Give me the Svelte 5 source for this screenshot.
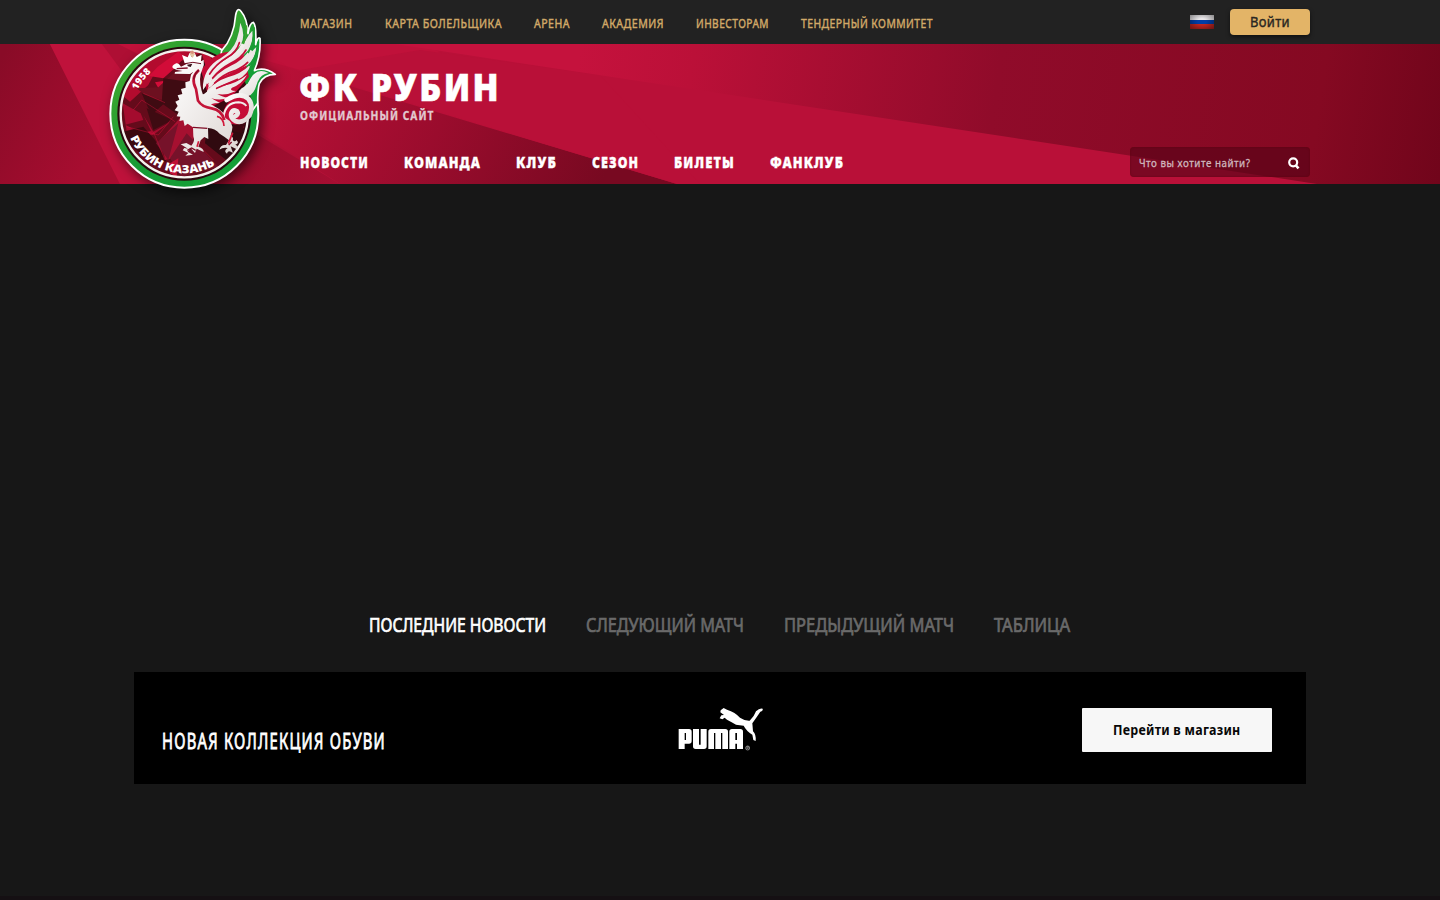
<script>
  const topLinks = [
    ['МАГАЗИН', 52.5], ['КАРТА БОЛЕЛЬЩИКА', 117], ['АРЕНА', 36],
    ['АКАДЕМИЯ', 62], ['ИНВЕСТОРАМ', 73], ['ТЕНДЕРНЫЙ КОММИТЕТ', 132]
  ];
  const menu = [['НОВОСТИ', 68], ['КОМАНДА', 76], ['КЛУБ', 40], ['СЕЗОН', 46], ['БИЛЕТЫ', 60], ['ФАНКЛУБ', 73]];
  const tabs = [['ПОСЛЕДНИЕ НОВОСТИ', 177], ['СЛЕДУЮЩИЙ МАТЧ', 158], ['ПРЕДЫДУЩИЙ МАТЧ', 170], ['ТАБЛИЦА', 76]];
</script>

{#snippet label(text, width, size, height)}
  <svg class="label" {width} {height} role="img" aria-label={text}>
    <text x="0" y={height - 1} font-size={size} textLength={width} lengthAdjust="spacingAndGlyphs">{text}</text>
  </svg>
{/snippet}

<div class="page">
  <header>
    <div class="topbar">
      <nav class="toplinks">
        {#each topLinks as [t, w]}<a href="#top">{@render label(t, w, 12.7, 10)}</a>{/each}
      </nav>
      <div class="account">
        <span class="flag"></span>
        <button class="login">{@render label('Войти', 40, 14.8, 12)}</button>
      </div>
    </div>

    <div class="hero">
      <svg class="facets" viewBox="0 44 1440 140" preserveAspectRatio="none">
        <defs>
          <linearGradient id="left" gradientUnits="userSpaceOnUse" x1="0" y1="60" x2="110" y2="120"><stop stop-color="#890b27"/><stop offset="1" stop-color="#a70d30"/></linearGradient>
          <linearGradient id="mid" gradientUnits="userSpaceOnUse" x1="270" y1="90" x2="580" y2="230"><stop stop-color="#b91037"/><stop offset=".5" stop-color="#9a0c2d"/><stop offset="1" stop-color="#780921"/></linearGradient>
          <linearGradient id="right" gradientUnits="userSpaceOnUse" x1="580" y1="50" x2="1440" y2="180"><stop stop-color="#c5123d"/><stop offset=".13" stop-color="#bb1038"/><stop offset=".48" stop-color="#900b2a"/><stop offset=".85" stop-color="#850922"/><stop offset="1" stop-color="#71051b"/></linearGradient>
          <linearGradient id="shade" gradientUnits="userSpaceOnUse" x1="240" y1="130" x2="335" y2="184"><stop stop-color="#970c2b"/><stop offset="1" stop-color="#a60e32"/></linearGradient>
        </defs>
        <path fill="#b91038" d="M0 44H1440V184H0Z"/>
        <path fill="url(#left)" d="M0 44H50L120 184H0Z"/>
        <path fill="#bf123b" d="M50 44H102L210 184H120Z"/>
        <path fill="#ae0f34" d="M102 44H118L300 120V184H205Z"/>
        <path fill="url(#mid)" d="M210 44L677 184H340L200 95Z"/>
        <path fill="#c0113a" d="M118 44H420L440 52L395 80L300 70L220 48V95Z"/>
        <path fill="#b91038" d="M300 70L420 50L600 75L700 184H677Z"/>
        <path fill="url(#shade)" d="M200 100L340 184H180Z"/>
        <path fill="url(#right)" d="M395 44H1440V184H1317Z"/>
      </svg>
      <div class="hero-inner">
        <div class="title">{@render label('ФК РУБИН', 202, 37.5, 30)}</div>
        <div class="subtitle">{@render label('ОФИЦИАЛЬНЫЙ САЙТ', 134.5, 11.6, 10)}</div>
        <div class="menu-row">
          <nav class="menu">{#each menu as [t, w]}<a href="#menu">{@render label(t, w + 1, 15, 12)}</a>{/each}</nav>
          <div class="search">
            {@render label('Что вы хотите найти?', 111.5, 11.2, 10)}
            <svg class="glass" width="12" height="13" viewBox="0 0 12 13"><circle cx="5.2" cy="5.3" r="4" fill="none" stroke="#fff" stroke-width="2.2"/><path d="M7.5 8l3 3.4" stroke="#fff" stroke-width="2.6"/></svg>
          </div>
        </div>
      </div>
    </div>

    <svg class="crest" width="200" height="210" viewBox="0 0 600 630" role="img" aria-label="Рубин Казань 1958">
      <defs>
        <linearGradient id="green" x1="0" y1="0" x2="1" y2="1"><stop stop-color="#4aaa2b"/><stop offset=".5" stop-color="#189b35"/><stop offset="1" stop-color="#12a238"/></linearGradient>
        <linearGradient id="pearl" x1="0" y1="0" x2="1" y2="1"><stop stop-color="#fff"/><stop offset="1" stop-color="#ddd5d2"/></linearGradient>
        <clipPath id="disc"><circle cx="268" cy="341" r="191"/></clipPath>
        <path id="arcYear" d="M127 271A158 158 0 0 1 174 212"/>
        <path id="arcName" d="M105 414A180 180 0 0 0 377 484"/>
      </defs>
      <g class="silhouette">
        <circle cx="268" cy="341" r="222" fill="url(#green)" stroke="#fff" stroke-width="6"/>
        <path fill="url(#green)" stroke="#fff" stroke-width="5" stroke-linejoin="round" d="M380 152C410 120 419 85 422 45Q427 20 438 34C455 54 458 76 459 101Q464 68 475 67Q485 77 482 134Q487 109 495 115C497 151 492 181 478 212Q507 199 541 223Q506 223 493 251Q488 267 488 310L440 375L360 250Z"/>
      </g>
      <circle cx="268" cy="341" r="201" fill="#29090e"/>
      <g clip-path="url(#disc)">
        <path fill="#650b1b" d="M70 140H470V550H70Z"/>
        <path fill="#b30b2e" d="M130 190L250 145L315 160L240 190L185 208L160 255L105 305L80 285Z"/>
        <path fill="#d20c38" d="M188 200L250 155L270 170L239 205L205 235L162 228ZM180 247L238 238L225 275L190 264Z"/>
        <path fill="#6d1020" d="M125 265L190 262L245 210L295 215L238 310L150 285Z"/>
        <path fill="#3f0b12" d="M140 280L210 308L175 340L160 325ZM205 235L280 245L250 345L200 310ZM155 325L232 360L175 390Z"/>
        <path fill="#a40c2e" d="M83 310L110 325L137 340L145 360L91 374L120 390L95 395ZM145 345L168 393L119 402L174 405L226 367L175 395Z"/>
        <path fill="#3b090f" d="M83 395L145 380L180 420L215 485L160 475L110 440Z"/>
        <path fill="#a61030" d="M198 418L258 350L310 380L275 465L210 480Z"/>
        <path fill="#76122a" d="M183 430L250 370L220 480ZM225 475L275 400L370 500L260 530Z"/>
        <path fill="#300a10" d="M335 380L470 350L450 410L400 485L330 430ZM335 150L385 190L350 260L315 225Z"/>
        <path fill="#c01034" d="M320 160L350 170L348 195L335 210ZM405 372L450 363L445 385L410 390ZM225 490L250 475L245 530L225 520Z"/>
        <g fill="none" stroke="#e01440" stroke-width="2" opacity=".6"><path d="M115 330L140 300L210 345L240 365M95 380L190 405L235 350M175 395L210 480M315 440L355 480M145 280L210 308"/></g>
      </g>
      <circle cx="268" cy="341" r="191" fill="none" stroke="#f5f2ee" stroke-width="7"/>
      <text class="crest-text" font-size="29"><textPath href="#arcYear" textLength="69">1958</textPath></text>
      <text class="crest-text" font-size="34"><textPath href="#arcName" textLength="302" lengthAdjust="spacingAndGlyphs">РУБИН КАЗАНЬ</textPath></text>

      <path fill="#3b0810" d="M345 240L430 235L450 245L470 300L440 400L335 375L290 300Z"/>
      <path fill="#c30c35" d="M318 212Q350 160 400 155L445 160L462 230L410 290L350 320Z"/>
      <path fill="url(#pearl)" d="M488 245Q497 223 521 219Q485 202 467 235Q456 257 440 265Q428 274 432 284Q465 300 480 268Z"/>
      <g fill="url(#pearl)">
        <path d="M324 270C321 228 343 191 378 174Q414 151 425 119Q434 93 436 68Q453 107 437 136Q411 164 378 186Q344 210 333 257Z"/>
        <path d="M339 246C355 206 386 184 414 168Q440 151 450 124Q460 104 472 92Q476 128 460 151Q441 173 408 190Q367 209 343 254Z"/>
        <path d="M341 258C359 224 398 204 432 188Q461 169 484 140Q482 175 458 195Q421 212 396 224Q359 240 338 269Z"/>
        <path d="M337 270Q363 244 398 232Q437 223 467 193Q459 225 428 239Q381 251 335 281Z"/>
        <path d="M327 282Q351 260 386 257Q423 251 456 225Q440 253 411 263Q401 271 423 273Q395 287 367 282Q388 294 400 292Q380 304 349 295L375 309Q342 309 331 323Q317 306 314 285Z"/>
      </g>
      <path fill="none" stroke="url(#pearl)" stroke-width="11" d="M334 250Q350 211 393 184Q433 162 445 132M343 258Q370 221 410 202Q449 184 469 151"/>
      <g fill="none" stroke="#c30d36" stroke-width="5" stroke-linecap="round"><path d="M344 222Q362 193 398 171Q425 156 433 128M353 234Q374 208 407 190Q440 174 453 150M359 249Q386 222 420 212Q446 200 458 187M365 265Q400 250 428 238"/></g>
      <g fill="none" stroke="url(#green)" stroke-width="5"><path d="M454 76Q457 105 445 132M477 82Q480 121 459 159M490 126Q486 174 462 198M474 211L455 251"/></g>

      <path fill="#c50d37" d="M382 370Q378 303 435 288Q475 296 470 340Q453 377 415 373Z"/>
      <path fill="none" stroke="url(#pearl)" stroke-width="14" stroke-linecap="round" d="M395 300Q436 274 460 296Q477 317 463 347Q444 372 421 363Q405 354 409 339Q414 328 425 333Q433 341 423 347"/>
      <path fill="none" stroke="url(#pearl)" stroke-width="6" d="M386 350Q391 308 431 307Q447 308 454 318"/>
      <path fill="url(#pearl)" d="M320 183L326 179Q329 194 322 208Q309 235 320 272Q326 300 355 317Q389 334 391 354Q417 368 411 391L407 407Q417 413 413 420Q420 428 424 420Q435 429 421 434Q435 440 425 448L407 439L414 459Q398 447 396 461Q384 453 398 444Q384 441 373 449Q377 433 393 435L402 421Q389 410 374 401Q360 385 339 384L340 417L328 411L317 421L310 440Q327 446 326 456L305 446L300 459L286 443L278 455L294 464L271 467L280 459L263 451L268 444L279 446L257 433L274 429L289 437Q301 425 295 409L294 382L278 371L269 378L265 361L253 363L256 350L245 349L251 335L239 331L248 318L241 305L253 299L248 286L262 282L258 267L272 263L271 247L284 243L288 224L295 215L285 222L239 221L240 216L263 213Q247 213 234 205Q227 197 244 190Q251 187 258 200L279 190L290 185Z"/>
      <path fill="none" stroke="#c31438" stroke-width="8" d="M312 210Q285 232 303 267L309 302Q320 321 350 325Q381 331 388 360"/>
      <path fill="none" stroke="#7f0b25" stroke-width="4" d="M294 382L337 385M311 210Q299 221 296 238M245 206L278 204M277 451L290 444L302 451M401 435L410 426"/>
      <path fill="none" stroke="#d11639" stroke-width="5" d="M311 424L306 440M413 398L400 431M366 349Q386 354 387 378"/>
      <path fill="#38101a" d="M276 194L292 191L287 201L279 199Z"/>
      <path fill="#fff" d="M269 190L261 165L278 172L284 158L290 171L298 157L305 171L320 164L317 190Z"/>
      <path fill="none" stroke="#6f1023" stroke-width="3" d="M269 191Q294 183 318 191"/>
      <path fill="#e4c7a5" d="M283 161L291 151L300 162L293 174Z"/><circle cx="292" cy="157" r="5" fill="#d9917c"/>
    </svg>
  </header>

  <main>
    <div class="slider"></div>
    <nav class="tabs">{#each tabs as [t, w], i}<a href="#tab" class:active={i === 0}>{@render label(t, w, 19.3, 16)}</a>{/each}</nav>
    <section class="banner">
      <div class="promo">{@render label('НОВАЯ КОЛЛЕКЦИЯ ОБУВИ', 224, 21.5, 18)}</div>
      <svg class="puma" width="90" height="46" viewBox="50 32 270 138" role="img" aria-label="Puma">
        <g fill="#fff" fill-rule="evenodd">
          <path d="M55 101H86Q94 101 94 109V137Q94 145 86 145H73V161H55ZM73 113V134H77V113Z"/>
          <path d="M98 101H116V148H121V101H139V153Q139 161 131 161H106Q98 161 98 153Z"/>
          <path d="M144 161V109Q144 101 152 101H195Q203 101 203 109V161H186V113H182V161H165V113H161V161Z"/>
          <path d="M207 161V109Q207 101 215 101H240Q248 101 248 109V161H230V145H225V161ZM225 113V134H230V113Z"/>
          <path d="M181 45L190 38L200 43Q225 51 239 67Q254 77 268 76Q281 65 287 48Q298 37 307 40Q309 46 300 49Q290 64 276 84L278 108Q288 118 286 137L279 134L276 118Q258 107 250 91Q238 89 227 88L214 81L200 73L193 67L186 72L178 69L183 60L191 59L180 51Z"/>
        </g>
        <circle cx="262" cy="158" r="6" fill="none" stroke="#bbb" stroke-width="2"/><path d="M260 162V154H264V158H260M262 158L265 162" fill="none" stroke="#bbb" stroke-width="1.5"/>
      </svg>
      <button class="shop">{@render label('Перейти в магазин', 127.5, 14.8, 12)}</button>
    </section>
  </main>
  <footer></footer>
</div>

<style>
  :global(body) { background: #171717; }
  .page { height: 900px; display: flex; flex-direction: column; overflow: hidden; background: #171717; font-family: "Noto Sans", "Open Sans", sans-serif; }
  header { position: relative; flex: none; }
  a { display: block; color: inherit; text-decoration: none; }
  .label { display: block; overflow: visible; fill: currentColor; stroke: currentColor; stroke-width: 0; }
  button { display: flex; align-items: center; justify-content: center; border: 0; padding: 0; font: inherit; }
  .topbar { height: 44px; box-sizing: border-box; display: flex; justify-content: space-between; align-items: flex-start; padding: 0 130px 0 300px; background: #222; }
  .toplinks { display: flex; gap: 32.2px; padding-top: 19px; color: #d1a968; letter-spacing: .6px; }
  .toplinks .label { stroke-width: .45px; }
  .account { display: flex; gap: 16px; padding-top: 9px; }
  .flag { width: 24px; height: 14px; margin-top: 6px; background: radial-gradient(ellipse at 50% 45%, transparent 25%, #0007), linear-gradient(#e8e6e9 35%, #003da5 35% 66%, #c62620 66%); }
  .login { width: 80px; height: 26px; border-radius: 4px; background: #e3b467; color: #292722; box-shadow: 0 2px 4px #0008; letter-spacing: .4px; }
  .login .label { stroke-width: .4px; }
  .hero { height: 140px; display: grid; }
  .facets { grid-area: 1 / 1; width: 1440px; height: 140px; }
  .hero-inner { grid-area: 1 / 1; z-index: 1; display: flex; flex-direction: column; padding: 28px 130px 0 299px; color: #fff; }
  .title { font-weight: 900; letter-spacing: 2.6px; }
  .title .label { stroke-width: .5px; }
  .subtitle { color: #e3c9d0; font-weight: 700; padding: 9px 0 0 1px; letter-spacing: 1.2px; }
  .subtitle .label { stroke-width: .3px; }
  .menu-row { display: flex; justify-content: space-between; align-items: flex-start; padding: 26px 0 0 1px; }
  .menu { display: flex; gap: 35px; padding-top: 10px; font-weight: 900; letter-spacing: 1.3px; }
  .menu .label { stroke-width: .3px; }
  .search { display: flex; align-items: center; justify-content: space-between; box-sizing: border-box; width: 180px; height: 30px; padding: 3px 10px 2px 9px; border-radius: 4px; background: rgba(85, 3, 22, .62); box-shadow: inset 0 0 2px #5008; color: #cfb7be; letter-spacing: .6px; }
  .search .label { stroke-width: .3px; }
  .search .glass { margin-top: 1px; }
  .crest { position: absolute; left: 95px; top: 0; z-index: 2; overflow: visible; }
  .silhouette { filter: drop-shadow(10px 12px 18px rgba(0, 0, 0, .6)); }
  .crest-text { font-weight: 900; fill: #fff; }
  main { flex: 1; display: flex; flex-direction: column; align-items: center; }
  .slider { height: 433px; flex: none; }
  .tabs { display: flex; gap: 40px; margin-right: 2px; color: #6a6a6a; }
  .tabs .label { stroke-width: .7px; }
  .tabs .active { color: #fff; }
  .banner { width: 1172px; height: 112px; margin-top: 39px; box-sizing: border-box; display: grid; grid-template-columns: 515px 1fr 190px; padding: 0 34px 0 28px; background: #000; }
  .promo { padding-top: 60px; color: #fff; letter-spacing: 1.8px; }
  .promo .label { stroke-width: .8px; }
  .puma { margin-top: 34px; margin-left: -.4px; }
  .shop { height: 44px; margin-top: 36px; background: #f7f7f7; color: #080808; font-weight: 700; border-radius: 1px; letter-spacing: .3px; }
  footer { height: 4px; background: #151013; }
</style>
